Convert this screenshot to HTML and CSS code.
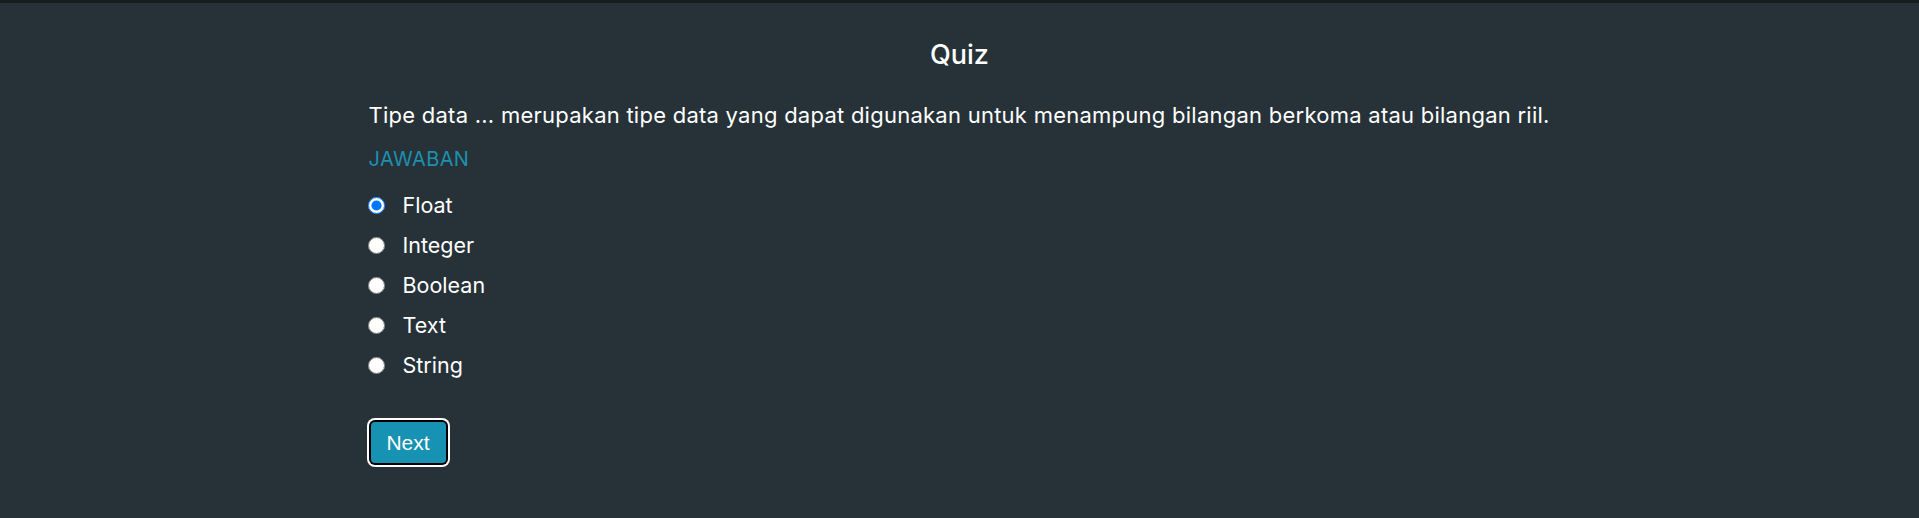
FILE: index.html
```html
<!DOCTYPE html>
<html lang="id">
<head>
<meta charset="utf-8">
<title>Quiz</title>
<link rel="stylesheet" href="styles.css">
</head>
<body>
<main class="quiz">
  <h1 class="quiz-title">Quiz</h1>
  <p class="question">Tipe data ... merupakan tipe data yang dapat digunakan untuk menampung bilangan berkoma atau bilangan riil.</p>
  <div class="answer-label">JAWABAN</div>
  <form class="options">
    <label class="option"><input type="radio" name="a" checked><span>Float</span></label>
    <label class="option"><input type="radio" name="a"><span>Integer</span></label>
    <label class="option"><input type="radio" name="a"><span>Boolean</span></label>
    <label class="option"><input type="radio" name="a"><span>Text</span></label>
    <label class="option"><input type="radio" name="a"><span>String</span></label>
  </form>
  <div class="actions"><button class="btn-next" type="button">Next</button></div>
</main>
</body>
</html>
```
FILE: styles.css
```css
html, body {
  margin: 0;
  padding: 0;
}
body {
  background: #263238;
  border-top: 3px solid #141e1e;
  min-height: 515px;
  font-family: "Inter", "Noto Sans", sans-serif;
  color: #ffffff;
}
.quiz {
  width: 1182px;
  margin: 0 auto;
  padding-top: 37px;
  display: flex;
  flex-direction: column;
}
.quiz-title {
  margin: 0;
  text-align: center;
  font-size: 27px;
  line-height: 30px;
  font-weight: 500;
}
.question {
  margin: 30px 0 0;
  font-size: 22px;
  line-height: 30px;
  letter-spacing: 0.25px;
  white-space: nowrap;
}
.answer-label {
  margin-top: 17px;
  font-size: 20px;
  line-height: 24px;
  color: #1e8fae;
  letter-spacing: 0.4px;
}
.options {
  margin: 14px 0 0;
  display: flex;
  flex-direction: column;
}
.option {
  height: 40px;
  display: flex;
  align-items: center;
  gap: 18px;
  font-size: 21.5px;
}
.option input {
  width: 17px;
  height: 17px;
  margin: 0 0 0 -1px;
}
.actions {
  margin-top: 37px;
  padding-left: 2px;
}
.btn-next {
  width: 75px;
  height: 41px;
  background: #1792b3;
  color: #fff;
  border: none;
  border-radius: 4px;
  font-family: "Liberation Sans", Arial, sans-serif;
  font-size: 21px;
  box-shadow: 0 0 0 2px #000, 0 0 0 4px #fff;
  padding: 0;
}
```
